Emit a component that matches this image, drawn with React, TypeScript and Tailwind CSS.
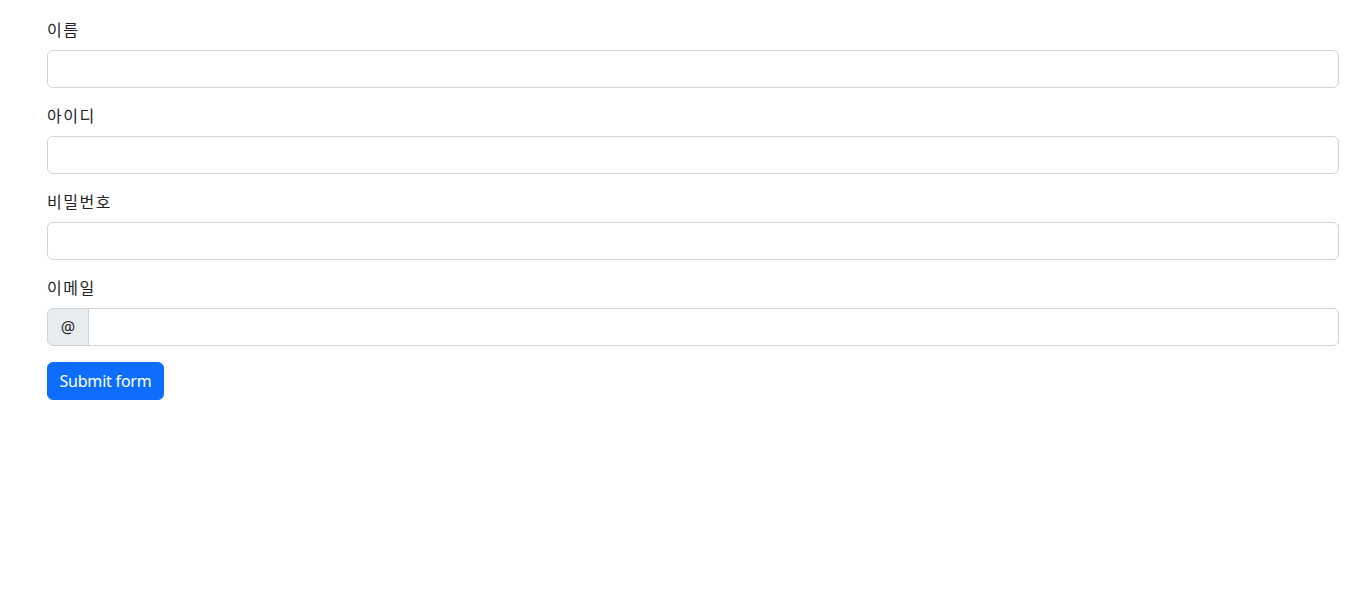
const font = { fontFamily: '"Segoe UI", "Noto Sans", "Noto Sans CJK KR", sans-serif' };

const Field = ({ label, type = 'text' }: { label: string; type?: string }) => (
  <div className="mb-4">
    <label className="mb-2 block text-base leading-6 tracking-[1.5px] text-[#212529]">{label}</label>
    <input
      type={type}
      className="block h-[38px] w-full rounded-md border border-[#ced4da] bg-white px-3 py-1.5 text-base text-[#212529] outline-none"
    />
  </div>
);

export default function App() {
  return (
    <div className="min-h-screen bg-white pl-[47px] pr-[25px] pt-[18px]" style={font}>
      <form onSubmit={(e) => e.preventDefault()}>
        <Field label="이름" />
        <Field label="아이디" />
        <Field label="비밀번호" type="password" />
        <div className="mb-4">
          <label className="mb-2 block text-base leading-6 tracking-[1.5px] text-[#212529]">이메일</label>
          <div className="flex h-[38px] w-full">
            <span className="flex w-[42px] items-center justify-center rounded-l-md border border-[#ced4da] bg-[#e9ecef] text-base text-[#212529]">
              @
            </span>
            <input
              type="email"
              className="-ml-px block min-w-0 flex-1 rounded-r-md border border-[#ced4da] bg-white px-3 py-1.5 text-base text-[#212529] outline-none"
            />
          </div>
        </div>
        <button
          type="submit"
          className="h-[38px] w-[117px] rounded-md border border-[#0d6efd] bg-[#0d6efd] text-base leading-6 tracking-[-0.2px] text-white"
        >
          Submit form
        </button>
      </form>
    </div>
  );
}
